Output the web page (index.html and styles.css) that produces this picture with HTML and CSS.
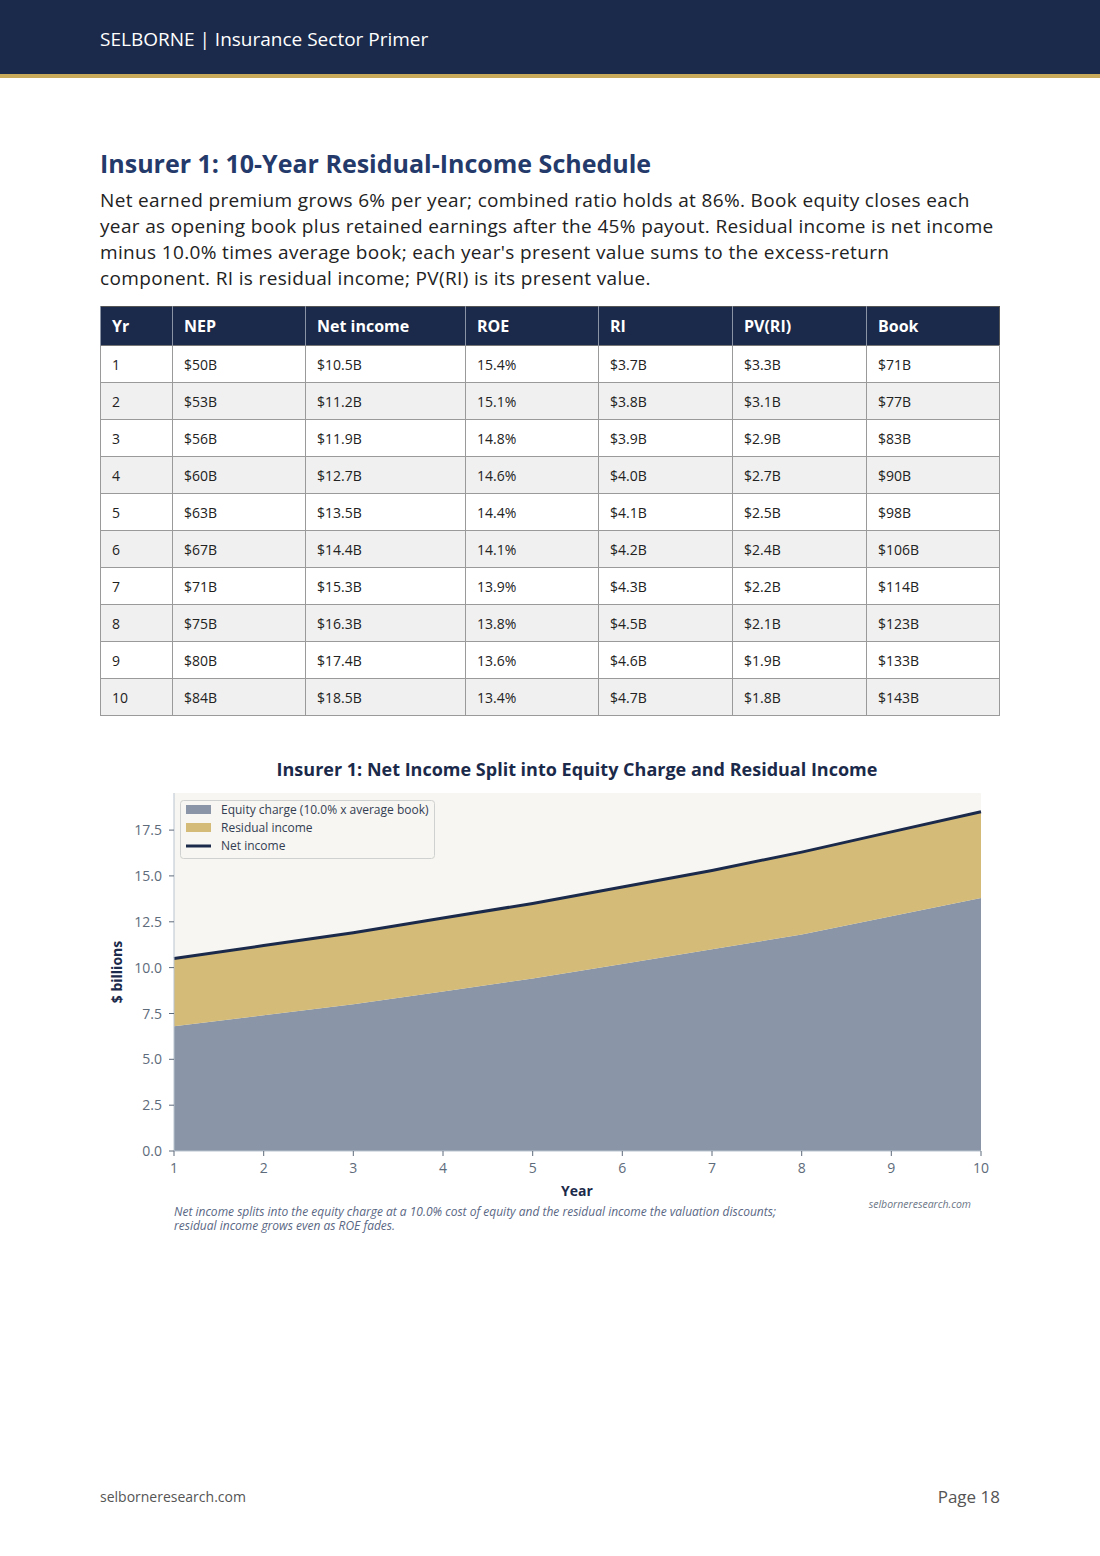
FILE: index.html
```html
<!DOCTYPE html>
<html lang="en">
<head>
    <meta charset="UTF-8">
    <meta name="viewport" content="width=device-width, initial-scale=1.0">
    <title>Insurance Sector Primer - Page 18</title>
    <link rel="stylesheet" href="styles.css">
</head>
<body>

    <header class="top-bar">
        <span>SELBORNE | Insurance Sector Primer</span>
    </header>

    <main class="page">
        <h2 class="section-title">Insurer 1: 10-Year Residual-Income Schedule</h2>
        <p class="intro">Net earned premium grows 6% per year; combined ratio holds at 86%. Book equity closes each year as opening book plus retained earnings after the 45% payout. Residual income is net income minus 10.0% times average book; each year's present value sums to the excess-return component. RI is residual income; PV(RI) is its present value.</p>

        <table class="schedule">
            <thead>
                <tr>
                    <th class="c-yr">Yr</th>
                    <th class="c-nep">NEP</th>
                    <th class="c-ni">Net income</th>
                    <th class="c-roe">ROE</th>
                    <th class="c-ri">RI</th>
                    <th class="c-pv">PV(RI)</th>
                    <th>Book</th>
                </tr>
            </thead>
            <tbody>
                <tr><td>1</td><td>$50B</td><td>$10.5B</td><td>15.4%</td><td>$3.7B</td><td>$3.3B</td><td>$71B</td></tr>
                <tr><td>2</td><td>$53B</td><td>$11.2B</td><td>15.1%</td><td>$3.8B</td><td>$3.1B</td><td>$77B</td></tr>
                <tr><td>3</td><td>$56B</td><td>$11.9B</td><td>14.8%</td><td>$3.9B</td><td>$2.9B</td><td>$83B</td></tr>
                <tr><td>4</td><td>$60B</td><td>$12.7B</td><td>14.6%</td><td>$4.0B</td><td>$2.7B</td><td>$90B</td></tr>
                <tr><td>5</td><td>$63B</td><td>$13.5B</td><td>14.4%</td><td>$4.1B</td><td>$2.5B</td><td>$98B</td></tr>
                <tr><td>6</td><td>$67B</td><td>$14.4B</td><td>14.1%</td><td>$4.2B</td><td>$2.4B</td><td>$106B</td></tr>
                <tr><td>7</td><td>$71B</td><td>$15.3B</td><td>13.9%</td><td>$4.3B</td><td>$2.2B</td><td>$114B</td></tr>
                <tr><td>8</td><td>$75B</td><td>$16.3B</td><td>13.8%</td><td>$4.5B</td><td>$2.1B</td><td>$123B</td></tr>
                <tr><td>9</td><td>$80B</td><td>$17.4B</td><td>13.6%</td><td>$4.6B</td><td>$1.9B</td><td>$133B</td></tr>
                <tr><td>10</td><td>$84B</td><td>$18.5B</td><td>13.4%</td><td>$4.7B</td><td>$1.8B</td><td>$143B</td></tr>
            </tbody>
        </table>

        <!-- chart: net income = equity charge + residual income -->
        <svg class="chart" width="900" height="490" viewBox="0 0 900 490">
            <text class="chart-title" x="477" y="25" text-anchor="middle">Insurer 1: Net Income Split into Equity Charge and Residual Income</text>

            <rect x="74" y="42" width="807" height="358" fill="#f7f6f2"/>

            <polygon fill="#8a96a8" points="74,400 74,275.3 163.7,264.3 253.3,253.3 343,240.4 432.7,227.6 522.3,212.9 612,198.3 701.7,183.6 791.3,165.2 881,146.9 881,400"/>
            <polygon fill="#d4bb78" points="74,207.4 163.7,194.6 253.3,181.8 343,167.1 432.7,152.4 522.3,135.9 612,119.4 701.7,101.1 791.3,80.9 881,60.7 881,146.9 791.3,165.2 701.7,183.6 612,198.3 522.3,212.9 432.7,227.6 343,240.4 253.3,253.3 163.7,264.3 74,275.3"/>
            <polyline fill="none" stroke="#1b2a4a" stroke-width="3" stroke-linejoin="round" points="74,207.4 163.7,194.6 253.3,181.8 343,167.1 432.7,152.4 522.3,135.9 612,119.4 701.7,101.1 791.3,80.9 881,60.7"/>

            <g stroke="#b9c3cf" stroke-width="1">
                <line x1="74" y1="42" x2="74" y2="400"/>
                <line x1="74" y1="400" x2="881" y2="400"/>
            </g>
            <g stroke="#5e6b7b" stroke-width="1">
                <line x1="69" y1="400" x2="74" y2="400"/>
                <line x1="69" y1="354.2" x2="74" y2="354.2"/>
                <line x1="69" y1="308.3" x2="74" y2="308.3"/>
                <line x1="69" y1="262.5" x2="74" y2="262.5"/>
                <line x1="69" y1="216.6" x2="74" y2="216.6"/>
                <line x1="69" y1="170.8" x2="74" y2="170.8"/>
                <line x1="69" y1="124.9" x2="74" y2="124.9"/>
                <line x1="69" y1="79.1" x2="74" y2="79.1"/>
                <line x1="74" y1="400" x2="74" y2="405"/>
                <line x1="163.7" y1="400" x2="163.7" y2="405"/>
                <line x1="253.3" y1="400" x2="253.3" y2="405"/>
                <line x1="343" y1="400" x2="343" y2="405"/>
                <line x1="432.7" y1="400" x2="432.7" y2="405"/>
                <line x1="522.3" y1="400" x2="522.3" y2="405"/>
                <line x1="612" y1="400" x2="612" y2="405"/>
                <line x1="701.7" y1="400" x2="701.7" y2="405"/>
                <line x1="791.3" y1="400" x2="791.3" y2="405"/>
                <line x1="881" y1="400" x2="881" y2="405"/>
            </g>

            <g class="tick" text-anchor="end">
                <text x="62" y="405">0.0</text>
                <text x="62" y="359.2">2.5</text>
                <text x="62" y="313.3">5.0</text>
                <text x="62" y="267.5">7.5</text>
                <text x="62" y="221.6">10.0</text>
                <text x="62" y="175.8">12.5</text>
                <text x="62" y="129.9">15.0</text>
                <text x="62" y="84.1">17.5</text>
            </g>
            <g class="tick" text-anchor="middle">
                <text x="74" y="422">1</text>
                <text x="163.7" y="422">2</text>
                <text x="253.3" y="422">3</text>
                <text x="343" y="422">4</text>
                <text x="432.7" y="422">5</text>
                <text x="522.3" y="422">6</text>
                <text x="612" y="422">7</text>
                <text x="701.7" y="422">8</text>
                <text x="791.3" y="422">9</text>
                <text x="881" y="422">10</text>
            </g>

            <text class="axis-label" x="477" y="445" text-anchor="middle">Year</text>
            <text class="axis-label" x="22" y="221" text-anchor="middle" transform="rotate(-90 22 221)">$ billions</text>

            <rect x="80.5" y="49.5" width="254" height="58" rx="3" fill="#f7f6f2" stroke="#cfd0d0"/>
            <rect x="86" y="54" width="25" height="9" fill="#8a96a8"/>
            <rect x="86" y="72" width="25" height="9" fill="#d4bb78"/>
            <line x1="86" y1="95" x2="111" y2="95" stroke="#1b2a4a" stroke-width="3"/>
            <g class="legend-text">
                <text x="121" y="63">Equity charge (10.0% x average book)</text>
                <text x="121" y="81">Residual income</text>
                <text x="121" y="99">Net income</text>
            </g>

            <g class="caption">
                <text x="74" y="465">Net income splits into the equity charge at a 10.0% cost of equity and the residual income the valuation discounts;</text>
                <text x="74" y="479">residual income grows even as ROE fades.</text>
            </g>
            <text class="watermark" x="871" y="457" text-anchor="end">selborneresearch.com</text>
        </svg>
    </main>

    <footer class="bottom-bar">
        <span class="site">selborneresearch.com</span>
        <span class="page-no">Page 18</span>
    </footer>

</body>
</html>
```

FILE: styles.css
```css
body {
    margin: 0;
    width: 1100px;
    height: 1556px;
    display: flex;
    flex-direction: column;
    font-family: "Open Sans", Arial, sans-serif;
    color: #222;
    background: white;
}

.top-bar {
    height: 74px;
    background-color: #1b2a4a;
    border-bottom: 4px solid #c9a95a;
    display: flex;
    align-items: center;
    padding: 0 100px;
    color: white;
    font-size: 19px;
}

.top-bar span {
    margin-top: 4px;
}

.page {
    padding: 0 100px;
}

.section-title {
    margin: 69px 0 8px;
    font-size: 25px;
    line-height: 32px;
    font-weight: bold;
    color: #243a6a;
}

.intro {
    margin: 0 0 15px;
    font-size: 19px;
    line-height: 26px;
    letter-spacing: 0.35px;
    color: #222;
}

.schedule {
    width: 900px;
    border-collapse: collapse;
    border: 1px solid #555;
    font-size: 14px;
}

.schedule th {
    background-color: #1b2a4a;
    color: white;
    height: 38px;
    padding: 0 11px;
    text-align: left;
    font-size: 16px;
    font-weight: bold;
    border-left: 1px solid #8a93a3;
}

.schedule td {
    height: 36px;
    padding: 0 11px;
    border: 1px solid #9a9a9a;
    border-top: 1px solid #777;
}

.schedule tbody tr:nth-child(even) {
    background-color: #f0f0f0;
}

.c-yr { width: 49px; }
.c-nep { width: 110px; }
.c-ni { width: 137px; }
.c-roe { width: 110px; }
.c-ri { width: 111px; }
.c-pv { width: 111px; }

.chart {
    display: block;
    margin-top: 35px;
    font-family: "Open Sans", "Noto Sans", sans-serif;
}

.chart-title {
    font-size: 18px;
    font-weight: bold;
    fill: #1b2a4a;
}

.tick text {
    font-size: 14px;
    fill: #5e6b7b;
}

.axis-label {
    font-size: 14px;
    font-weight: bold;
    fill: #1b2a4a;
}

.legend-text text {
    font-size: 12px;
    fill: #333d52;
}

.caption text {
    font-size: 12px;
    font-style: italic;
    fill: #5a6784;
}

.watermark {
    font-size: 10.5px;
    font-style: italic;
    fill: #6b7585;
}

.bottom-bar {
    margin-top: auto;
    padding: 0 100px 50px;
    display: flex;
    justify-content: space-between;
    align-items: center;
    height: 20px;
}

.site {
    font-size: 14px;
    color: #555;
}

.page-no {
    font-size: 17px;
    color: #555;
}
```
